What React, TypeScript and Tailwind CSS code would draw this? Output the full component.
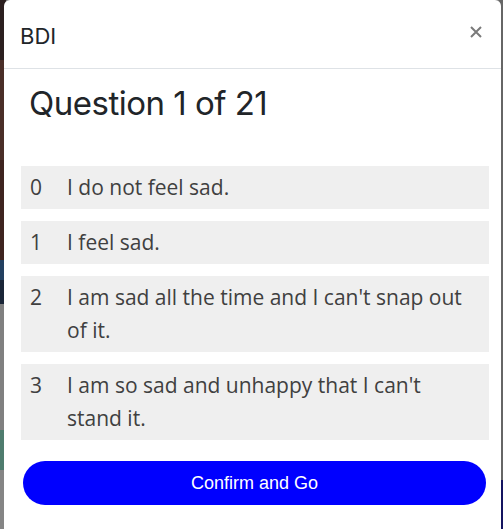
import React from "react";

const options = [
  { n: 0, t: "I do not feel sad." },
  { n: 1, t: "I feel sad." },
  { n: 2, t: "I am sad all the time and I can't snap out of it." },
  { n: 3, t: "I am so sad and unhappy that I can't stand it." },
];

export default function App() {
  return (
    <div className="relative w-[503px] h-[529px] overflow-hidden bg-[#7a7a7a]">
      {/* backdrop strips (photo behind modal) */}
      <div className="absolute left-0 top-0 w-[6px] h-full flex flex-col">
        <div className="h-[60px] bg-[#2b1f1f]" />
        <div className="h-[100px] bg-[#4a2e28]" />
        <div className="h-[100px] bg-[#3e2420]" />
        <div className="h-[20px] bg-[#234060]" />
        <div className="h-[24px] bg-[#1a2638]" />
        <div className="h-[126px] bg-[#808080]" />
        <div className="h-[40px] bg-[#4f7c6e]" />
        <div className="flex-1 bg-[#858585]" />
      </div>
      <div className="absolute right-0 top-0 w-[4px] h-full flex flex-col">
        <div className="h-[480px] bg-[#666666]" />
        <div className="flex-1 bg-[#141460]" />
      </div>

      {/* modal */}
      <div className="absolute left-[4px] top-0 w-[497px] h-[540px] bg-white rounded-t-[6px]">
        <div className="h-[69px] border-b border-[#dee2e6] flex items-center justify-between pl-[16px] pr-[19px]">
          <h5
            className="text-[22px] text-[#212529] leading-none pt-[4px]"
            style={{ fontFamily: "Inter, 'Noto Sans', sans-serif" }}
          >
            BDI
          </h5>
          <svg width="12" height="12" viewBox="0 0 12 12" className="mb-[4px]">
            <path d="M1 1 L11 11 M11 1 L1 11" stroke="#7a7a7a" strokeWidth="2" />
          </svg>
        </div>
        <div className="pl-[17px] pr-[12px]">
          <h2
            className="text-[33px] text-[#212529] leading-none pt-[18px] pl-[8px] tracking-[-0.5px]"
            style={{ fontFamily: "Inter, 'Noto Sans', sans-serif" }}
          >
            Question 1 of 21
          </h2>
          <div className="mt-[46px] flex flex-col gap-[12px]">
            {options.map((o) => (
              <div
                key={o.n}
                className="bg-[#efefef] flex pl-[9px] pr-[15px] py-[5px] text-[21px] leading-[33px] text-[#404040]"
                style={{ fontFamily: "'Open Sans', 'Noto Sans', sans-serif" }}
              >
                <span className="w-[37px] shrink-0">{o.n}</span>
                <span>{o.t}</span>
              </div>
            ))}
          </div>
          <button
            className="mt-[21px] ml-[2px] w-[463px] h-[44px] rounded-full bg-[#0000ff] text-white text-[18px]"
            style={{ fontFamily: "'Liberation Sans', Arial, sans-serif" }}
          >
            Confirm and Go
          </button>
        </div>
      </div>
    </div>
  );
}
